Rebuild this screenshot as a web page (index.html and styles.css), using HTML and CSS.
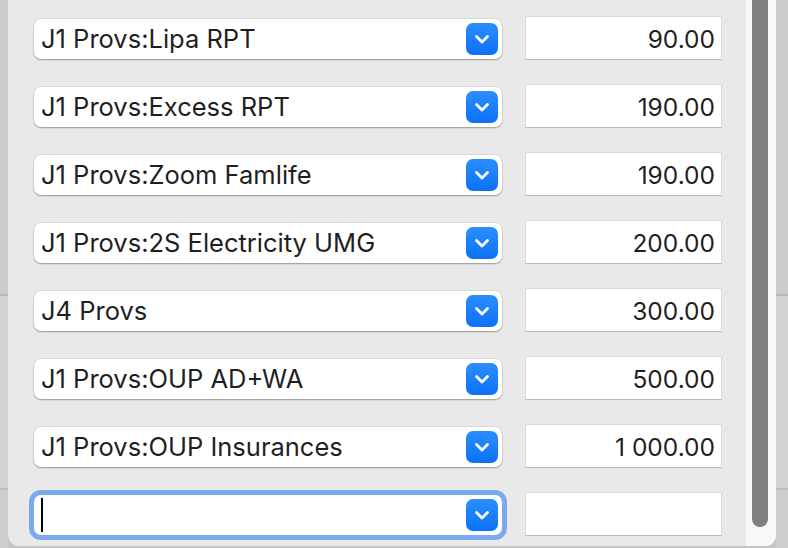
FILE: index.html
```html
<!DOCTYPE html>
<html lang="en">
<head>
  <meta charset="UTF-8">
  <title>Splits</title>
  <link rel="stylesheet" href="styles.css">
</head>
<body>
  <div class="side side-left"></div>

  <div class="panel">
    <div class="rows">
      <div class="row">
        <div class="combo"><span class="combo-text">J1 Provs:Lipa RPT</span><span class="combo-btn"><svg viewBox="0 0 20 20" width="20" height="20"><path d="M4.5 7.5 L10 13 L15.5 7.5" /></svg></span></div>
        <div class="amount">90.00</div>
      </div>
      <div class="row">
        <div class="combo"><span class="combo-text">J1 Provs:Excess RPT</span><span class="combo-btn"><svg viewBox="0 0 20 20" width="20" height="20"><path d="M4.5 7.5 L10 13 L15.5 7.5" /></svg></span></div>
        <div class="amount">190.00</div>
      </div>
      <div class="row">
        <div class="combo"><span class="combo-text">J1 Provs:Zoom Famlife</span><span class="combo-btn"><svg viewBox="0 0 20 20" width="20" height="20"><path d="M4.5 7.5 L10 13 L15.5 7.5" /></svg></span></div>
        <div class="amount">190.00</div>
      </div>
      <div class="row">
        <div class="combo"><span class="combo-text">J1 Provs:2S Electricity UMG</span><span class="combo-btn"><svg viewBox="0 0 20 20" width="20" height="20"><path d="M4.5 7.5 L10 13 L15.5 7.5" /></svg></span></div>
        <div class="amount">200.00</div>
      </div>
      <div class="row">
        <div class="combo"><span class="combo-text">J4 Provs</span><span class="combo-btn"><svg viewBox="0 0 20 20" width="20" height="20"><path d="M4.5 7.5 L10 13 L15.5 7.5" /></svg></span></div>
        <div class="amount">300.00</div>
      </div>
      <div class="row">
        <div class="combo"><span class="combo-text">J1 Provs:OUP AD+WA</span><span class="combo-btn"><svg viewBox="0 0 20 20" width="20" height="20"><path d="M4.5 7.5 L10 13 L15.5 7.5" /></svg></span></div>
        <div class="amount">500.00</div>
      </div>
      <div class="row">
        <div class="combo"><span class="combo-text">J1 Provs:OUP Insurances</span><span class="combo-btn"><svg viewBox="0 0 20 20" width="20" height="20"><path d="M4.5 7.5 L10 13 L15.5 7.5" /></svg></span></div>
        <div class="amount">1 000.00</div>
      </div>
      <div class="row">
        <div class="combo combo-focus"><span class="combo-text"><span class="caret"></span></span><span class="combo-btn"><svg viewBox="0 0 20 20" width="20" height="20"><path d="M4.5 7.5 L10 13 L15.5 7.5" /></svg></span></div>
        <div class="amount"></div>
      </div>
    </div>

    <div class="scrollbar">
      <div class="thumb"></div>
    </div>
  </div>

  <div class="side side-right"></div>
</body>
</html>
```

FILE: styles.css
```css
html, body {
  height: 100%;
}
body {
  margin: 0;
  overflow: hidden;
  display: flex;
  background-color: #c6c6c6;
  font-family: Inter, "Liberation Sans", sans-serif;
  color: #1f1f1f;
}
.side {
  height: 100%;
  background: linear-gradient(to bottom, #cdcdcd 0, #cdcdcd 294px, #b8b8b8 294px, #b8b8b8 296px, #d2d2d2 296px, #d2d2d2 488px, #bcbcbc 488px, #bcbcbc 490px, #cfcfcf 490px);
}
.side-left {
  width: 8px;
  flex: none;
}
.side-right {
  width: 12px;
  flex: none;
}
.panel {
  flex: 1;
  height: 546px;
  display: flex;
  background-color: #e9e9e9;
  border-radius: 0 0 11px 11px;
  overflow: hidden;
}
.rows {
  flex: 1;
  display: flex;
  flex-direction: column;
  gap: 24px;
  padding: 16px 0 0 26px;
}
.row {
  display: flex;
  align-items: flex-start;
  gap: 23px;
  height: 44px;
}
.combo {
  width: 468px;
  height: 40px;
  margin-top: 3px;
  box-sizing: border-box;
  display: flex;
  align-items: center;
  background-color: #fff;
  border-radius: 7px;
  box-shadow: 0 0 0 0.5px rgba(0, 0, 0, 0.12), 0 1px 1.5px rgba(0, 0, 0, 0.3);
  padding: 0 4px 0 7px;
}
.combo-focus {
  box-shadow: 0 0 0 5px #7ba9ef, 0 0 0 1px #5f97ec;
}
.combo-text {
  flex: 1;
  font-size: 25.5px;
  line-height: 30px;
  white-space: nowrap;
  display: flex;
  align-items: center;
}
.caret {
  display: block;
  width: 2px;
  height: 34px;
  background-color: #000;
}
.combo-btn {
  width: 32px;
  height: 32px;
  border-radius: 7px;
  background: linear-gradient(#2b8fff, #0c70f7);
  display: flex;
  align-items: center;
  justify-content: center;
}
.combo-btn svg path {
  fill: none;
  stroke: #fff;
  stroke-width: 2.8;
  stroke-linecap: round;
  stroke-linejoin: round;
}
.amount {
  width: 197px;
  height: 44px;
  box-sizing: border-box;
  background-color: #fff;
  border: 1px solid #dadada;
  border-bottom-color: #b9b9b9;
  text-align: right;
  font-size: 24.5px;
  line-height: 44px;
  padding-right: 6px;
}
.scrollbar {
  width: 31px;
  flex: none;
  box-sizing: border-box;
  background-color: #f8f8f8;
  border-left: 1px solid #ececec;
  padding-left: 6px;
}
.thumb {
  width: 16px;
  height: 527px;
  background-color: #7f7f7f;
  border-radius: 0 0 8px 8px;
}
```
